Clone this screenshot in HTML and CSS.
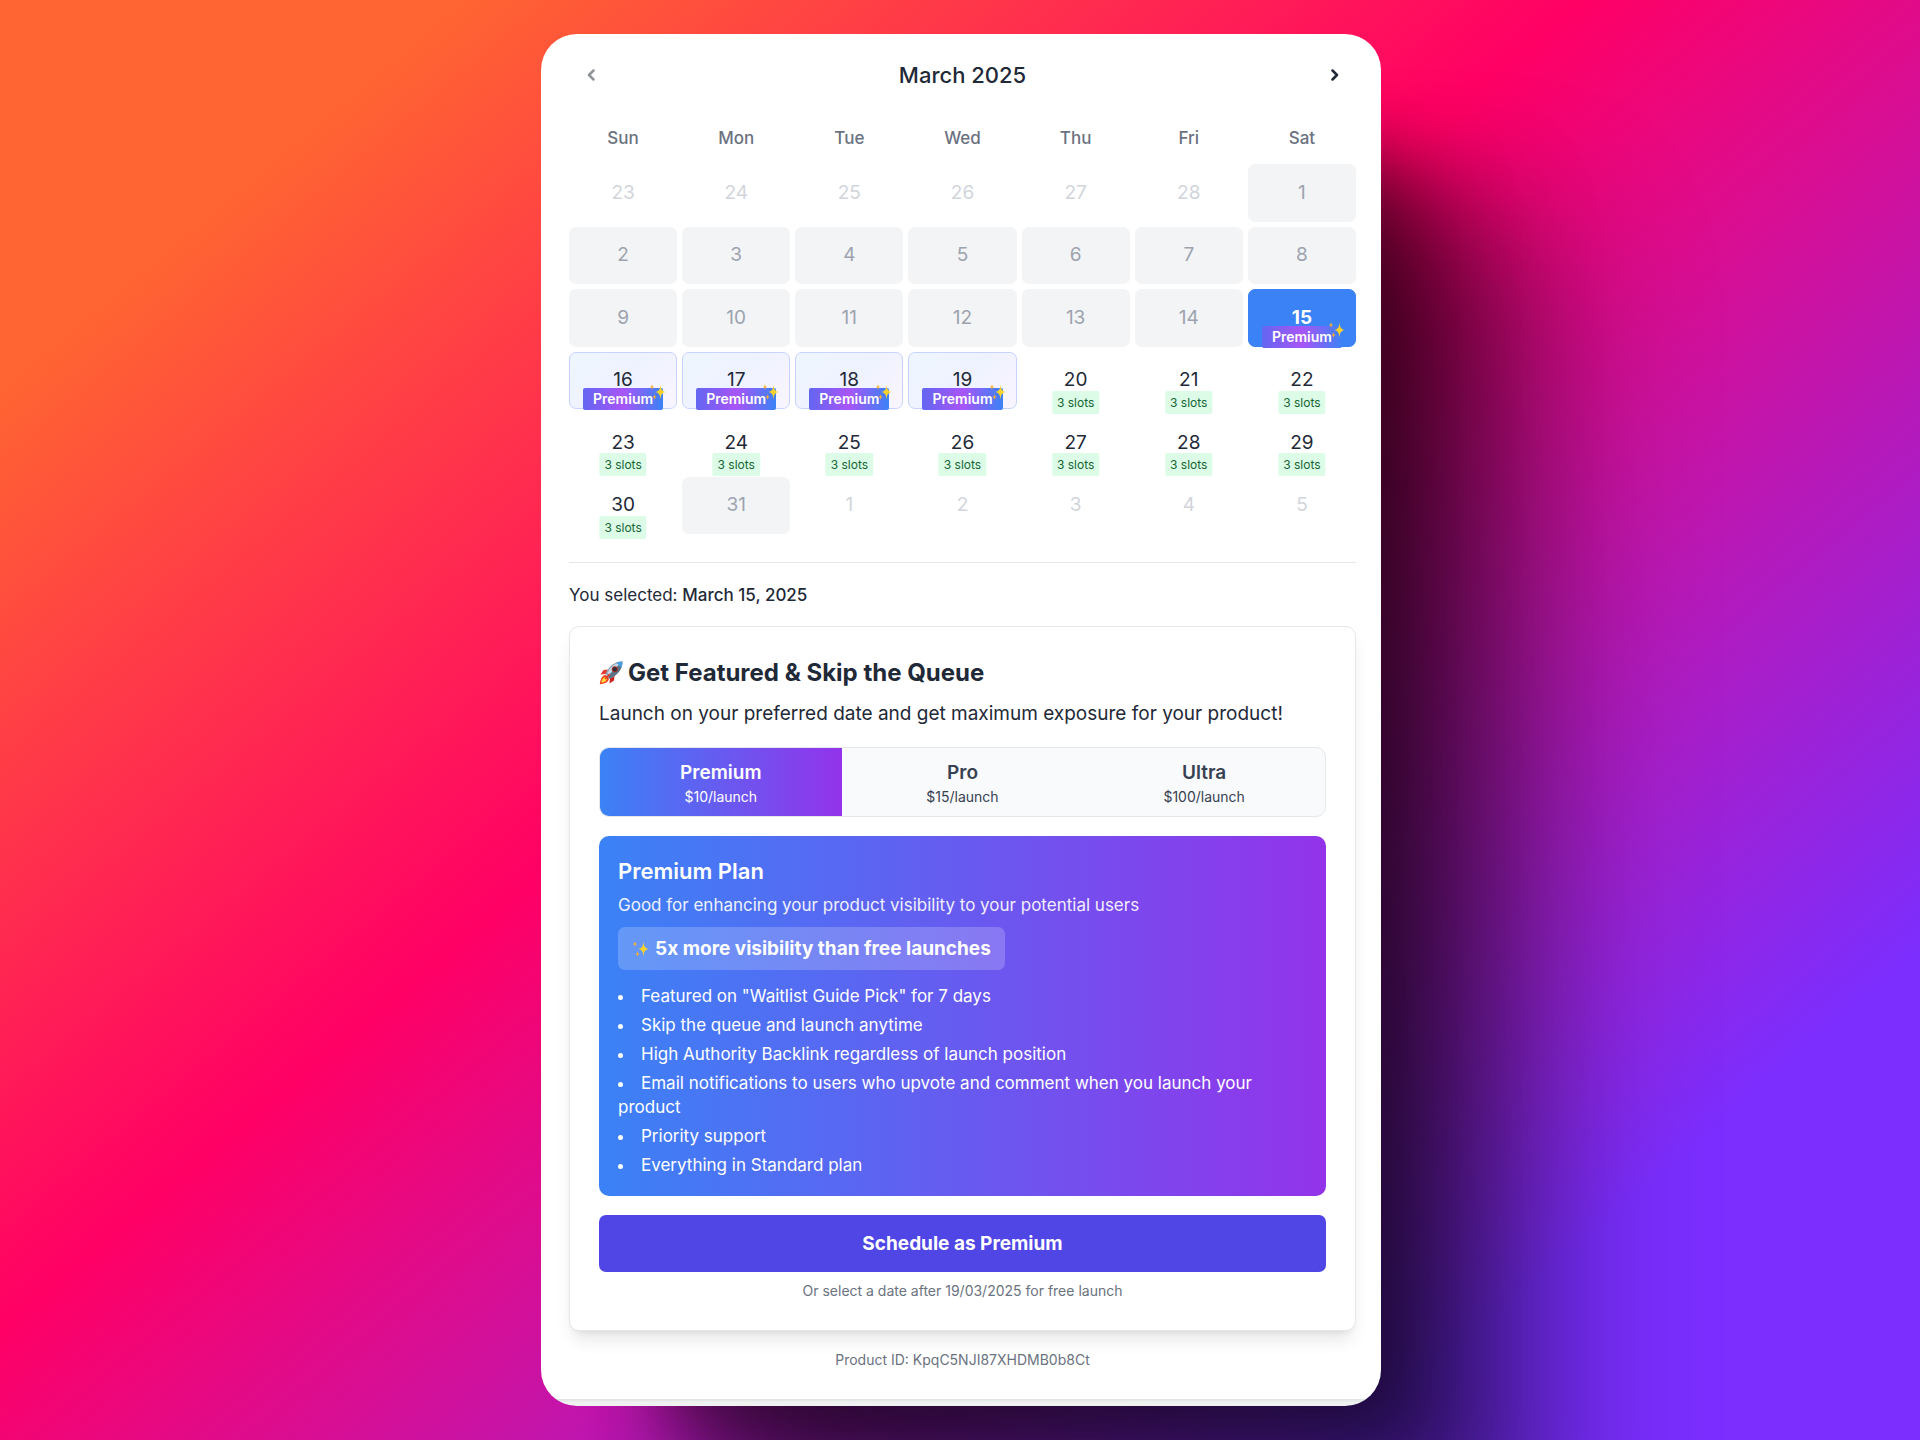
FILE: index.html
```html
<!DOCTYPE html>
<html lang="en">
<head>
<meta charset="utf-8">
<title>Schedule your launch</title>
<meta name="viewport" content="width=device-width, initial-scale=1.0">
<link rel="stylesheet" href="styles.css">
</head>
<body>
<!-- shared emoji art -->
<svg class="defs" aria-hidden="true">
  <symbol id="sparkles" viewBox="0 0 18 18">
    <path fill="#fdd32b" d="M11.5 1.5C12 6.6 12.800 8.200 17 9C12.800 9.800 12 11.400 11.500 16.500C11 11.400 10.200 9.800 6 9C10.200 8.200 11 6.600 11.500 1.500Z"/>
    <path fill="#fbb02a" d="M3 1C3.300 3 3.700 3.700 5.500 4C3.700 4.300 3.300 5 3 7C2.700 5 2.300 4.300 .5 4C2.300 3.700 2.700 3 3 1Z"/>
    <path fill="#fbb02a" d="M5.500 11C5.800 13 6.200 13.700 8 14C6.200 14.300 5.800 15 5.500 17C5.200 15 4.800 14.300 3 14C4.800 13.700 5.200 13 5.500 11Z"/>
  </symbol>
</svg>

<main class="card">
  <header class="month">
    <button class="nav" disabled aria-label="Previous month"><svg viewBox="0 0 8 12"><path d="M6.500 1.500L2 6L6.500 10.500"/></svg></button>
    <h1>March 2025</h1>
    <button class="nav" aria-label="Next month"><svg viewBox="0 0 8 12"><path d="M1.500 1.500L6 6L1.500 10.500"/></svg></button>
  </header>

  <div class="weekdays">
    <span>Sun</span><span>Mon</span><span>Tue</span><span>Wed</span><span>Thu</span><span>Fri</span><span>Sat</span>
  </div>
  <div class="days" id="days"></div>

  <p class="selected">You selected: <strong>March 15, 2025</strong></p>

  <section class="featured">
    <h2>
      <svg class="rocket" viewBox="0 0 24 24" aria-hidden="true">
        <path fill="#e23a2e" d="M9 8.500L4.500 9L1.500 13.500L7 13Z"/>
        <path fill="#c9251d" d="M15.500 15L15 19.500L10.500 22.500L11 17Z"/>
        <path fill="#f0421f" d="M6.500 14C3 14.500 1.500 17.500 .8 23.200C6.500 22.500 9.500 21 10 17.500Z"/>
        <path fill="#ffd93b" d="M6 16C4 16.500 2.800 18.500 2.200 21.800C5.500 21.200 7.500 20 8 18Z"/>
        <path fill="#8fa3b5" d="M23.400 .6C16 .6 10.500 4.500 6.300 13.200L10.800 17.700C19.500 13.500 23.400 8 23.400 .6Z"/>
        <path fill="#5c7285" d="M23.400 .6L8.500 15.500L10.800 17.700C19.500 13.500 23.400 8 23.400 .6Z"/>
        <path fill="#c8dbe8" d="M19 2C14.500 3.500 11.500 6.500 8.500 12L10 13.500L20 3.500Z"/>
        <path fill="#4a9fe0" d="M23.400 .6C21 .6 19 1 17.200 1.600L22.400 6.800C23.100 5 23.400 3 23.400 .6Z"/>
        <circle cx="15.800" cy="8.200" r="3" fill="#a92b25"/>
        <circle cx="15.800" cy="8.200" r="2" fill="#26323d"/>
        <path fill="#e5372c" d="M10.300 12.500L11.500 13.700L6.500 18.500L5.500 17.500Z"/>
      </svg>
      Get Featured &amp; Skip the Queue
    </h2>
    <p class="lead">Launch on your preferred date and get maximum exposure for your product!</p>

    <div class="tabs">
      <button class="tab active"><b>Premium</b><span>$10/launch</span></button>
      <button class="tab"><b>Pro</b><span>$15/launch</span></button>
      <button class="tab"><b>Ultra</b><span>$100/launch</span></button>
    </div>

    <div class="plan">
      <h3>Premium Plan</h3>
      <p class="plan-text">Good for enhancing your product visibility to your potential users</p>
      <p class="boost"><svg class="sparkle" aria-hidden="true"><use href="#sparkles"/></svg>5x more visibility than free launches</p>
      <ul>
        <li>Featured on "Waitlist Guide Pick" for 7 days</li>
        <li>Skip the queue and launch anytime</li>
        <li>High Authority Backlink regardless of launch position</li>
        <li>Email notifications to users who upvote and comment when you launch your product</li>
        <li>Priority support</li>
        <li>Everything in Standard plan</li>
      </ul>
    </div>

    <button class="schedule">Schedule as Premium</button>
    <p class="note">Or select a date after 19/03/2025 for free launch</p>
  </section>

  <p class="product-id">Product ID: KpqC5NJI87XHDMB0b8Ct</p>
</main>

<script>
const days = document.getElementById('days');

function addDay(num, type) {
    const day = document.createElement('button');
    day.className = 'day ' + type;
    day.disabled = type === 'other' || type === 'closed';
    let html = `<span class="num">${num}</span>`;
    if (type.includes('premium')) {
        html += '<span class="tag">Premium<svg class="sparkle" aria-hidden="true"><use href="#sparkles"/></svg></span>';
    }
    if (type === 'free') {
        html += '<span class="slots">3 slots</span>';
    }
    day.innerHTML = html;
    days.appendChild(day);
}

for (let d = 23; d <= 28; d++) addDay(d, 'other');
for (let d = 1; d <= 31; d++) {
    if (d < 15 || d === 31) addDay(d, 'closed');
    else if (d === 15) addDay(d, 'premium current');
    else if (d < 20) addDay(d, 'premium');
    else addDay(d, 'free');
}
for (let d = 1; d <= 5; d++) addDay(d, 'other');
</script>
</body>
</html>
```

FILE: styles.css
```css
* {
    box-sizing: border-box;
    margin: 0;
    padding: 0;
}
body {
    min-height: 100vh;
    display: flex;
    justify-content: center;
    align-items: flex-start;
    padding: 34px 20px 34px 22px;
    overflow: hidden;
    font-family: Inter, "Liberation Sans", sans-serif;
    font-size: 17px;
    line-height: 24px;
    color: #1f2937;
    background: linear-gradient(140deg, #ff6432 12.8%, #ff0065 43.52%, #7b2eff 84.34%);
}
button {
    font: inherit;
    color: inherit;
    border: 0;
    background: none;
    cursor: pointer;
}
.defs {
    position: absolute;
    width: 0;
    height: 0;
}
.sparkle {
    width: 18px;
    height: 18px;
}

.card {
    width: 100%;
    max-width: 840px;
    padding: 17px 25px 34px 28px;
    border-radius: 36px;
    background: linear-gradient(#dfe1e2, #f0f2f1 50%) no-repeat bottom / 100% 7px, #fff;
    box-shadow:
        65px 65px 60px -55px rgba(0, 0, 0, 0.3),
        95px 95px 80px -45px rgba(0, 0, 0, 0.3),
        135px 135px 110px -25px rgba(0, 0, 0, 0.3),
        190px 190px 150px -10px rgba(0, 0, 0, 0.34);
}

/* calendar */
.month {
    display: flex;
    justify-content: space-between;
    align-items: center;
    height: 48px;
}
.month h1 {
    font-size: 22px;
    font-weight: 500;
}
.nav {
    width: 43px;
    height: 43px;
}
.nav svg {
    width: 8px;
    height: 12px;
    fill: none;
    stroke: #1f2937;
    stroke-width: 2.5;
    stroke-linecap: round;
    stroke-linejoin: round;
}
.nav:disabled svg {
    opacity: 0.5;
}
.weekdays,
.days {
    display: grid;
    grid-template-columns: repeat(7, 1fr);
    column-gap: 5px;
}
.weekdays {
    padding: 27px 0 14px;
    text-align: center;
    font-weight: 500;
    color: #6b7280;
}
.days {
    grid-template-rows: repeat(6, 1fr);
    height: 399px;
    row-gap: 5px;
    padding-bottom: 28px;
    border-bottom: 1px solid #e5e7eb;
}
.day {
    position: relative;
    border-radius: 7px;
    font-size: 19px;
}
.other {
    color: #d1d5db;
}
.closed {
    color: #9ca3af;
    background: #f3f4f6;
}
.premium {
    border: 1px solid #c7d2fe;
    background: linear-gradient(135deg, #eff6ff, #eef2ff, #faf5ff);
}
.current {
    border-color: #3b82f6;
    background: #3b82f6;
    color: #fff;
    font-weight: 700;
}
.tag {
    position: absolute;
    left: 13px;
    right: 13px;
    bottom: -2px;
    height: 22px;
    border-radius: 2px;
    background: linear-gradient(90deg, #6366f1, #a855f7, #3b82f6);
    color: #fff;
    font-size: 14px;
    font-weight: 600;
    line-height: 22px;
}
.tag .sparkle {
    position: absolute;
    right: -4px;
    top: -5px;
}
.slots {
    position: absolute;
    left: 50%;
    top: 39px;
    transform: translateX(-50%);
    padding: 0 5px;
    border-radius: 2px;
    background: #dcfce7;
    color: #166534;
    font-size: 12px;
    line-height: 23px;
    white-space: nowrap;
}

/* selection and plans */
.selected {
    padding: 20px 0 19px;
}
.selected strong {
    font-weight: 500;
}
.featured {
    padding: 29px 29px 27px;
    border: 1px solid #e5e7eb;
    border-radius: 10px;
    background: #fff;
    box-shadow: 0 12px 18px -4px rgba(0, 0, 0, 0.1), 0 5px 7px -5px rgba(0, 0, 0, 0.1);
}
.featured h2 {
    display: flex;
    align-items: center;
    gap: 5px;
    font-size: 24px;
    font-weight: 700;
    line-height: 33px;
}
.rocket {
    width: 24px;
    height: 24px;
}
.lead {
    margin: 10px 0 19px;
    font-size: 19px;
    line-height: 29px;
}
.tabs {
    display: grid;
    grid-template-columns: repeat(3, 1fr);
    margin-bottom: 19px;
    border: 1px solid #e5e7eb;
    border-radius: 10px;
    overflow: hidden;
    background: #f9fafb;
    color: #374151;
}
.tab {
    padding: 10px;
}
.tab b {
    display: block;
    font-size: 19px;
    font-weight: 600;
    line-height: 29px;
}
.tab span {
    display: block;
    font-size: 14px;
    line-height: 19px;
}
.tab.active {
    color: #fff;
}
.tab.active,
.plan {
    background: linear-gradient(90deg, #3b82f6, #9333ea);
}
.plan {
    padding: 19px;
    border-radius: 10px;
    color: #fff;
}
.plan h3 {
    font-size: 22px;
    font-weight: 600;
    line-height: 33px;
}
.plan-text {
    margin: 5px 0 10px;
    opacity: 0.9;
}
.boost {
    display: inline-flex;
    align-items: center;
    gap: 5px;
    padding: 7px 14px;
    margin-bottom: 14px;
    border-radius: 7px;
    background: rgba(255, 255, 255, 0.2);
    font-size: 19px;
    font-weight: 700;
    line-height: 29px;
}
.plan ul {
    list-style: disc inside;
}
.plan li + li {
    margin-top: 5px;
}
.schedule {
    display: block;
    width: 100%;
    margin: 19px 0 7px;
    padding: 14px;
    border-radius: 7px;
    background: #4f46e5;
    color: #fff;
    font-size: 19px;
    font-weight: 700;
    line-height: 29px;
}
.note,
.product-id {
    text-align: center;
    font-size: 14px;
    color: #6b7280;
}
.product-id {
    margin-top: 17px;
}
```
